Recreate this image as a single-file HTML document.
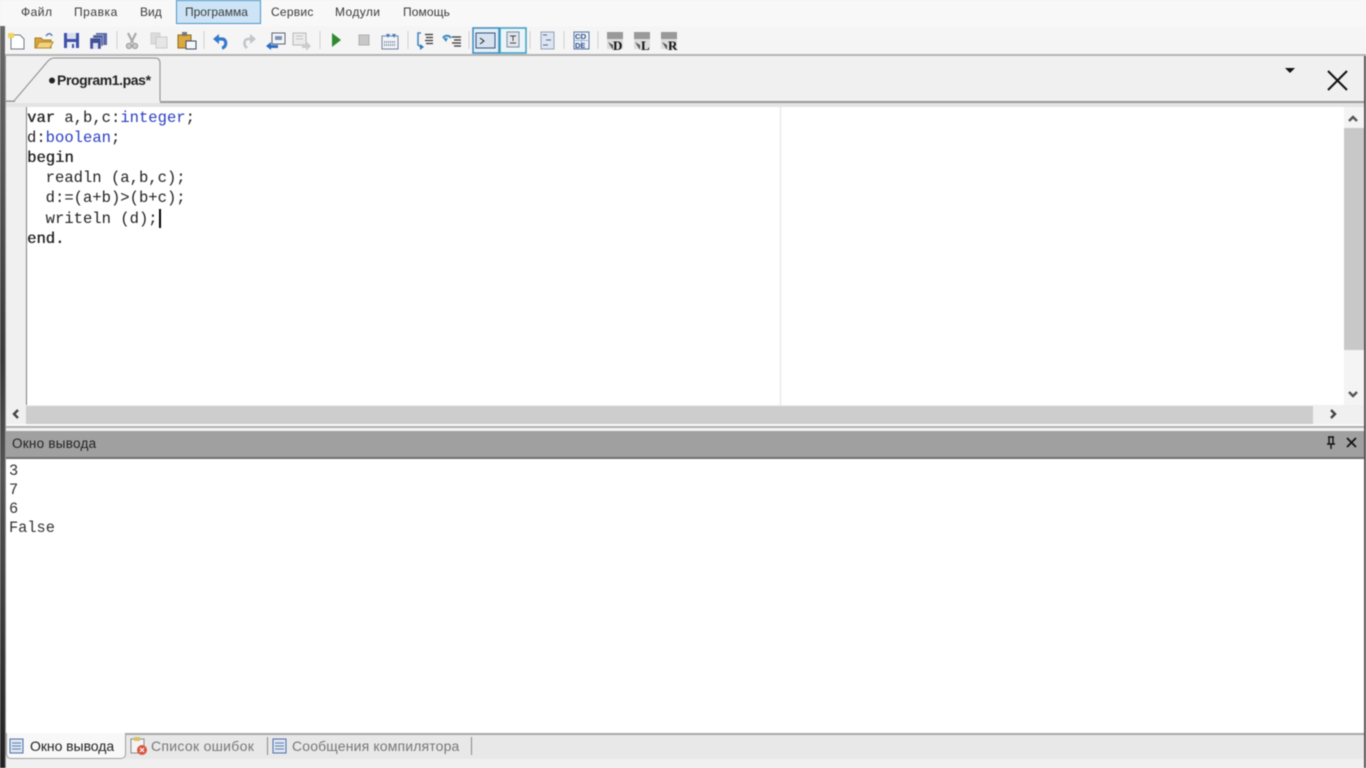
<!DOCTYPE html>
<html><head><meta charset="utf-8"><style>
html,body{margin:0;padding:0;width:1366px;height:768px;overflow:hidden;background:#f0f0f0}
body{filter:blur(.4px)}
div,span{position:absolute;white-space:pre}
.m{top:4px;font:12px/16px "Liberation Sans",sans-serif;color:#3a3a3a}
.c{left:27px;font:15.55px/20px "Liberation Mono",monospace;color:#222}
.k{position:static;color:#2a3fc0}
.o{left:9px;font:15.3px/19px "Liberation Mono",monospace;color:#333}
.t{top:738px;font:14px/17px "Liberation Sans",sans-serif}
</style></head><body>
<div style="left:0;top:0;width:1366px;height:26px;background:#f8f8f8"></div>
<div style="left:0;top:26px;width:1366px;height:28px;background:#f5f5f5"></div>
<div style="left:0;top:54px;width:1366px;height:2px;background:#b4b4b4"></div>
<div style="left:0;top:56px;width:1366px;height:46px;background:#f0f0f0"></div>
<div style="left:176px;top:0;width:83px;height:22px;background:#cde4f6;border:1px solid #4a94c8"></div>
<div class="m" style="left:21px;letter-spacing:.5px">Файл</div>
<div class="m" style="left:74px;letter-spacing:.55px">Правка</div>
<div class="m" style="left:140px">Вид</div>
<div class="m" style="left:185px">Программа</div>
<div class="m" style="left:271px;letter-spacing:.25px">Сервис</div>
<div class="m" style="left:335px;letter-spacing:.4px">Модули</div>
<div class="m" style="left:403px;letter-spacing:.1px">Помощь</div>

<svg style="position:absolute;left:0;top:0" width="1366" height="110" viewBox="0 0 1366 110">
<!-- new -->
<path d="M11 35h9l4 4v10H11z" fill="#fff" stroke="#6d7a88"/><path d="M8 33h6v5H8z" fill="#f2d45c"/>
<!-- open -->
<path d="M35 48V38h6l2 2h8v8z" fill="#d9a63c" stroke="#a57c28"/><path d="M36 48l3-6h14l-3 6z" fill="#f2d27c" stroke="#b58a30"/><path d="M46 36c2-3 5-3 6 0" fill="none" stroke="#5a7fb0" stroke-width="1.5"/>
<!-- save -->
<path d="M64 33h15v15H64z" fill="#3f51a8"/><path d="M67 33h9v6h-9z" fill="#d8e0f0"/><path d="M67 42h9v6h-9z" fill="#eef0f8"/><path d="M72 44h2v4h-2z" fill="#3f51a8"/>
<!-- save all -->
<path d="M96 33h11v12H96z" fill="#5c6aa8"/><path d="M93 35h10v11H93z" fill="#4a5a9c" stroke="#eee" stroke-width=".5"/><path d="M90 38h11v11H90z" fill="#3f4f98" stroke="#eee" stroke-width=".5"/><path d="M93 43h5v6h-5z" fill="#dfe3f0"/>
<path d="M117 31v18M204 31v18M320 31v18M408 31v18M469 31v18M530 31v18M564 31v18M598 31v18" stroke="#d0d0d0"/>
<!-- cut -->
<path d="M128 33l5 10M136 33l-5 10" stroke="#aaa" stroke-width="2.2" fill="none"/><circle cx="129" cy="46" r="2.6" fill="#c8c8c8" stroke="#999"/><circle cx="135" cy="46" r="2.6" fill="#c8c8c8" stroke="#999"/>
<!-- copy -->
<path d="M151 33h9v11h-9z" fill="#dcdcdc" stroke="#d0d0d0"/><path d="M156 37h11v11h-11z" fill="#e6e6e6" stroke="#cacaca"/>
<!-- paste -->
<path d="M178 35h13v13h-13z" fill="#dba93e" stroke="#8a6a20"/><path d="M182 32h5v4h-5z" fill="#777"/><path d="M186 41h10v8h-10z" fill="#f4f6fa" stroke="#3d4a66"/>
<!-- undo -->
<path d="M216 39h6c5 0 5 8 0 9" fill="none" stroke="#3479cc" stroke-width="3.2"/><path d="M213 39l6-5v10z" fill="#3479cc"/>
<!-- redo -->
<path d="M253 39h-5c-4 0-5 6-1 9" fill="none" stroke="#c2c6c8" stroke-width="2.6"/><path d="M256 39l-6-5v10z" fill="#c2c6c8"/>
<!-- find -->
<path d="M272 33h13v11h-13z" fill="#f4f6fa" stroke="#5a6472"/><path d="M275 36h7v4h-7z" fill="#7f93b8"/><path d="M266 46l5-4v8z" fill="#2f6cc4"/><path d="M270 45h8v3h-8z" fill="#2f6cc4"/>
<!-- find dis -->
<path d="M293 33h13v12h-13z" fill="#ebebeb" stroke="#b8b8b8"/><path d="M296 36h7M296 39h7" stroke="#c4c4c4"/><path d="M302 44h4v-3l5 5-5 5v-3h-4z" fill="#cccccc"/>
<!-- run -->
<path d="M332 33l9 7-9 7z" fill="#2e8a2e"/>
<!-- stop -->
<path d="M359 35h10v10h-10z" fill="#c8c8c8" stroke="#b0b0b0"/>
<!-- compile -->
<path d="M382 36h16v13h-16z" fill="#f2f5f8" stroke="#6f82a0"/><path d="M384 42h12M384 45h12" stroke="#7a8ca4" stroke-dasharray="1 1" stroke-width="2"/><path d="M386 34l2 4 2-4zM392 34l2 4 2-4z" fill="#3d7cc0"/>
<!-- step into -->
<path d="M421 33h-3v12l3 2" fill="none" stroke="#4a88c4" stroke-width="1.6"/><path d="M420 44l4 3-4 3z" fill="#3478bc"/><path d="M425 34.500h8M426 37.500h7M425 40.500h8M426 43.500h7" stroke="#333" stroke-width="1.2"/>
<!-- step over -->
<path d="M443 38c2-3 6-3 8 0" fill="none" stroke="#3d8cc0" stroke-width="2"/><path d="M443 38h5l-2 4z" fill="#3d8cc0"/><path d="M452 37h9M454 40h7M452 43h9M454 46h7" stroke="#333" stroke-width="1.2"/>
<!-- active pair -->
<rect x="473" y="28" width="26" height="25" fill="#e2eff8" stroke="#3c8cbc" stroke-width="1.5"/>
<rect x="500" y="28" width="26" height="25" fill="#eaf4f9" stroke="#3ca0c0" stroke-width="1.5"/>
<rect x="476" y="33" width="19" height="15" fill="#d6e2f0" stroke="#34527a"/><path d="M480 38l4 3-4 3" fill="none" stroke="#222"/>
<rect x="507" y="32" width="12" height="15" fill="#e2e6ec" stroke="#7a8ca0"/><path d="M510 36h6M513 36v5M510 43h6" stroke="#444"/>
<!-- struct -->
<path d="M541 32h13v17h-13z" fill="#dde5f0" stroke="#93a4bb"/><path d="M543 35h4M546 40h5M543 45h5" stroke="#4f6c95"/>
<!-- code -->
<path d="M574 32h15v17h-15z" fill="#eef2f8" stroke="#5573a0"/><path d="M574 40.500h15M581.500 32v17" stroke="#a0b4d0"/>
<text x="575" y="39" font-family="Liberation Sans" font-size="7.500" font-weight="bold" fill="#2c4c88">CO</text><text x="575" y="48" font-family="Liberation Sans" font-size="7.500" font-weight="bold" fill="#2c4c88">DE</text>
<!-- D L R -->
<g fill="#999"><path d="M607 32h16v7h-16z"/><path d="M634 32h16v7h-16z"/><path d="M661 32h16v7h-16z"/></g>
<g fill="#dcdcdc"><path d="M607 39h16v10h-16z"/><path d="M634 39h16v10h-16z"/><path d="M661 39h16v10h-16z"/></g>
<g fill="#555"><path d="M608 42l5 3v5z"/><path d="M635 42l5 3v5z"/><path d="M662 42l5 3v5z"/></g>
<g font-family="Liberation Serif" font-size="13" font-weight="bold" fill="#111"><text x="613" y="50">D</text><text x="641" y="50">L</text><text x="668" y="50">R</text></g>
<!-- tab -->
<path d="M6 101h10L48 61q3-3 6-3h101q5 0 5 5v39H6z" fill="#f0f0f0"/>
<path d="M6 101h8L48 61q3-3 6-3h101q5 0 5 5v38" fill="none" stroke="#8d8d8d"/>
<path d="M1285 68h10l-5 5z" fill="#111"/>
<path d="M1328 71l19 19M1347 71l-19 19" stroke="#111" stroke-width="2"/>
<circle cx="52" cy="80.500" r="3" fill="#222"/>
</svg>
<div style="left:160px;top:101px;width:1206px;height:2px;background:#9a9a9a"></div>
<div style="left:6px;top:101px;width:9px;height:1px;background:#9a9a9a"></div>
<div style="left:57px;top:72px;font:bold 14px/17px 'Liberation Sans',sans-serif;color:#222;letter-spacing:-.4px">Program1.pas*</div>

<div style="left:6px;top:103px;width:1360px;height:4px;background:#e4e4e4"></div>
<div style="left:6px;top:107px;width:1358px;height:298px;background:#fff"></div>
<div style="left:6px;top:107px;width:20px;height:298px;background:#f0f0f0"></div>
<div style="left:26px;top:107px;width:1px;height:298px;background:#7f7f7f"></div>
<div style="left:780px;top:107px;width:1px;height:298px;background:#e2e2e2"></div>
<div class="c" style="top:108px"><b style="font-weight:normal;text-shadow:.4px 0 #222">var</b> a,b,c:<span class="k">integer</span>;</div>
<div class="c" style="top:128px">d:<span class="k">boolean</span>;</div>
<div class="c" style="top:148px;text-shadow:.4px 0 #222">begin</div>
<div class="c" style="top:168px">  readln (a,b,c);</div>
<div class="c" style="top:188px">  d:=(a+b)&gt;(b+c);</div>
<div class="c" style="top:209px">  writeln (d);</div>
<div class="c" style="top:229px;text-shadow:.4px 0 #222">end.</div>
<div style="left:159px;top:209px;width:2px;height:19px;background:#000"></div>

<!-- v scroll -->
<div style="left:1344px;top:107px;width:20px;height:298px;background:#f4f4f4"></div>
<div style="left:1344px;top:128px;width:20px;height:222px;background:#c8c8c8"></div>
<!-- h scroll -->
<div style="left:6px;top:405px;width:1358px;height:19px;background:#f0f0f0"></div>
<div style="left:26px;top:406px;width:1287px;height:18px;background:#cdcdcd"></div>
<div style="left:6px;top:424px;width:1360px;height:2px;background:#fafafa"></div>
<div style="left:6px;top:426px;width:1360px;height:2px;background:#b0b0b0"></div>
<div style="left:6px;top:428px;width:1360px;height:3px;background:#f2f2f2"></div>
<!-- output header -->
<div style="left:6px;top:431px;width:1360px;height:26px;background:#a0a0a0"></div>
<div style="left:6px;top:457px;width:1360px;height:2px;background:#707070"></div>
<div style="left:12px;top:436px;font:13.5px/16px 'Liberation Sans',sans-serif;color:#222;letter-spacing:.25px">Окно вывода</div>
<svg style="position:absolute;left:0;top:0" width="1366" height="470" viewBox="0 0 1366 470">
<path d="M1349 121l4-4 4 4M1349 392l4 4 4-4" fill="none" stroke="#555" stroke-width="2.400"/>
<path d="M18 410l-4 4 4 4M1331 410l4 4-4 4" fill="none" stroke="#444" stroke-width="2.400"/>
<path d="M1328 437h6M1329 437v7h4v-7M1327 444h8M1331 444v5" fill="none" stroke="#111" stroke-width="1.4"/>
<path d="M1347 438l9 9M1356 438l-9 9" stroke="#111" stroke-width="1.700"/>
</svg>
<!-- output -->
<div style="left:6px;top:459px;width:1360px;height:274px;background:#fff"></div>
<div class="o" style="top:462px">3</div>
<div class="o" style="top:481px">7</div>
<div class="o" style="top:500px">6</div>
<div class="o" style="top:519px">False</div>
<!-- bottom tabs -->
<div style="left:6px;top:733px;width:1360px;height:2px;background:#a8a8a8"></div>
<div style="left:6px;top:735px;width:1360px;height:24px;background:#e8e8e8"></div>
<div style="left:6px;top:759px;width:1360px;height:9px;background:#f0f0f0"></div>
<div style="left:6px;top:733px;width:118px;height:25px;background:#f8f8f8;border:1px solid #a0a0a0;border-top:none;border-radius:0 0 5px 5px"></div>
<svg style="position:absolute;left:0;top:0;z-index:2" width="500" height="768" viewBox="0 0 500 768">
<path d="M10 739h13v14H10z" fill="#dfe6f2" stroke="#4c6ea8"/><path d="M12 743h9M12 746h9M12 749h9" stroke="#5c7cb0"/>
<path d="M131 739h13v14h-13z" fill="#f4f4f4" stroke="#8a8a8a"/><path d="M134 737h6v4h-6z" fill="#d6c26a"/><circle cx="142" cy="750" r="5" fill="#d8563c"/><path d="M140 748l4 4M144 748l-4 4" stroke="#fff" stroke-width="1.200"/>
<path d="M273 739h13v14h-13z" fill="#dfe6f2" stroke="#4c6ea8"/><path d="M275 743h9M275 746h9M275 749h9" stroke="#5c7cb0"/>
<path d="M267.500 737v18M471.500 737v18" stroke="#8a8a8a"/>
</svg>
<div class="t" style="left:30px;color:#222;z-index:2;letter-spacing:-.05px">Окно вывода</div>
<div class="t" style="left:151px;color:#777;letter-spacing:.3px">Список ошибок</div>
<div class="t" style="left:292px;color:#777;letter-spacing:.15px">Сообщения компилятора</div>
<!-- edges -->
<div style="left:0;top:26px;width:5px;height:742px;background:linear-gradient(#6a6a6a,#3a3a3a 45%,#555 60%,#222)"></div>
<div style="left:5px;top:56px;width:1px;height:712px;background:#9a9a9a"></div>
<div style="left:1364px;top:56px;width:2px;height:712px;background:#555"></div>
</body></html>
